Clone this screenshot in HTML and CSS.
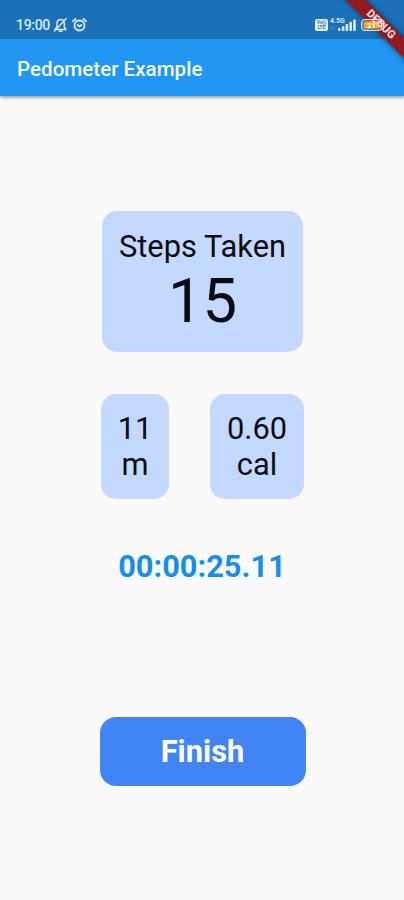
FILE: index.html
```
<!DOCTYPE html>
<html lang="en">
<head>
<meta charset="utf-8">
<title>Pedometer Example</title>
<link rel="stylesheet" href="styles.css">
</head>
<body>
<div class="screen">
  <header class="header">
    <div class="banner band"></div>
    <div class="status">
      <span class="clock">19:00</span>
      <svg class="bell" width="15" height="16" viewBox="0 0 15 16" fill="none" stroke="currentColor" stroke-width="1.5" stroke-linecap="round" stroke-linejoin="round"><path d="M2 12.5h11L11.3 10V6.5C11.3 4 9.8 2.5 7.7 2.5S4 4 4 6.5V10L2 12.5M6.3 14.3h2.6M13.3 1.5L1.5 14"/></svg>
      <svg class="alarm" width="15" height="16" viewBox="0 0 15 16" fill="none" stroke="currentColor" stroke-width="1.8" stroke-linecap="round"><circle cx="7.5" cy="8.5" r="5"/><path d="M5.6 8l1.9 1.5L9.4 8M1 4.2L3.6 2M14 4.2L11.4 2"/></svg>
      <span class="spacer"></span>
      <span class="volte"><span>Vo))</span><span>LTE</span></span>
      <span class="network"><span>4.5G</span><span class="arrows">↓↑</span></span>
      <svg class="signal" width="18" height="12" viewBox="0 0 18 12" fill="currentColor"><rect x="0" y="9" width="2.6" height="3" rx=".8"/><rect x="3.8" y="7.2" width="2.6" height="4.8" rx=".8"/><rect x="7.6" y="5" width="2.6" height="7" rx=".8"/><rect x="11.4" y="2.8" width="2.6" height="9.2" rx=".8"/><rect x="15.2" y="0.5" width="2.6" height="11.5" rx=".8"/></svg>
      <svg class="battery" width="24" height="12" viewBox="0 0 24 12"><rect x=".7" y=".7" width="20" height="10.6" rx="3.2" fill="none" stroke="#e2e6e8" stroke-width="1.3"/><rect x="2.6" y="2.3" width="16.2" height="7.4" rx="1.5" fill="#eda52b"/><path d="M22.8 4v4" stroke="#e2e6e8" stroke-width="1.5" stroke-linecap="round"/><text class="level" x="10.5" y="9" text-anchor="middle">21</text></svg>
    </div>
    <div class="appbar"><h1>Pedometer Example</h1></div>
    <div class="banner caption">DEBUG</div>
  </header>
  <main class="content">
    <section class="card steps">
      <div class="label">Steps Taken</div>
      <div class="count">15</div>
    </section>
    <div class="stats">
      <section class="card stat distance"><div>11</div><div>m</div></section>
      <section class="card stat calories"><div>0.60</div><div>cal</div></section>
    </div>
    <div class="timer">00:00:25.11</div>
    <button class="finish">Finish</button>
  </main>
</div>
</body>
</html>
```
FILE: styles.css
```
* { box-sizing: border-box; }
body { margin: 0; background: #fafafa; font-family: Roboto, sans-serif; }
.screen { width: 404px; height: 900px; overflow: hidden; position: relative; display: flex; flex-direction: column; }
.header { height: 96px; flex: none; background: #2196f3; box-shadow: 0 1px 4px rgba(0,0,0,.5); }
.status { height: 39px; background: #1a71b8; color: #d5eafa; display: flex; align-items: center; padding: 10px 19px 0 16px; }
.clock { font-size: 14px; font-weight: 500; width: 37px; letter-spacing: -.3px; white-space: nowrap; }
.alarm { margin-left: 4px; }
.spacer { flex: 1; }
.volte { width: 13px; height: 12px; border-radius: 2px; background: #e2f1fb; color: #3679b0; font-size: 5px; line-height: 5px; font-weight: 700; padding-top: 1px; text-align: center; display: flex; flex-direction: column; }
.network { width: 17px; margin-left: 2px; height: 14px; font-size: 7px; line-height: 7px; font-weight: 700; display: flex; flex-direction: column; }
.arrows { font-size: 5px; opacity: .6; }
.signal { margin-left: -9px; }
.battery { margin-left: 5px; position: relative; z-index: 2; }
.level { font-size: 7.5px; font-weight: 700; fill: #fff; }
.appbar { height: 57px; display: flex; align-items: center; padding: 3px 0 0 17px; color: #f3faff; }
.appbar h1 { margin: 0; font-size: 20.6px; font-weight: 500; white-space: nowrap; }
.banner { position: absolute; left: 320.25px; top: 17px; width: 120px; height: 13.5px; transform: rotate(45deg); }
.band { z-index: 1; background: #92191e; box-shadow: 0 0 6px rgba(0,0,0,.55); }
.caption { z-index: 3; padding-left: 2px; line-height: 14px; color: #ecd3d5; font-size: 11.3px; font-weight: 900; text-align: center; }
.content { flex: 1; display: flex; flex-direction: column; align-items: center; padding-top: 115px; color: #080c12; }
.card { background: #c4d9ff; border-radius: 15px; text-align: center; }
.steps { width: 201px; height: 141px; padding-top: 17px; margin-left: 1px; }
.label { font-size: 30.8px; line-height: 37px; white-space: nowrap; }
.count { font-size: 61.6px; line-height: 73px; }
.stats { display: flex; justify-content: space-between; width: 203px; margin: 42px 0 0 1px; }
.stat { height: 105px; padding-top: 17px; font-size: 30.8px; line-height: 36px; }
.distance { width: 68px; }
.calories { width: 94px; }
.timer { margin-top: 50px; font-size: 30.8px; line-height: 36px; font-weight: 700; color: #168fec; white-space: nowrap; }
.finish { margin: 131.5px 0 0 1px; width: 206px; height: 69px; border: 0; border-radius: 16px; background: #4184f6; color: #fff; font: 700 30.8px/36px Roboto, sans-serif; padding: 1px 0 0; }
```
